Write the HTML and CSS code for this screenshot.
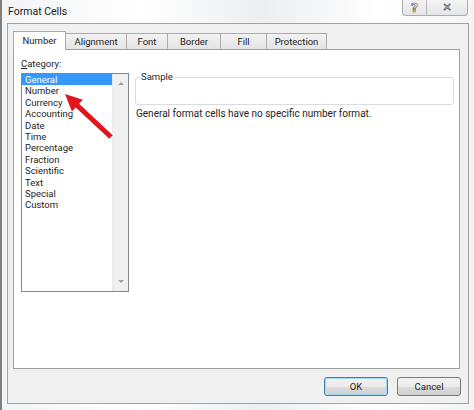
FILE: index.html
```html
<!DOCTYPE html>
<html lang="en">
<head>
<meta charset="utf-8">
<title>Format Cells</title>
<link rel="stylesheet" href="styles.css">
</head>
<body>
<div class="window">
  <div class="titlebar">
    <span class="title">Format Cells</span>
    <div class="caption-buttons">
      <span class="cap help">?</span>
      <span class="cap close">✕</span>
    </div>
  </div>
  <div class="dialog">
    <div class="tabs">
      <span class="tab active">Number</span>
      <span class="tab">Alignment</span>
      <span class="tab">Font</span>
      <span class="tab">Border</span>
      <span class="tab">Fill</span>
      <span class="tab">Protection</span>
    </div>
    <div class="panel">
      <div class="category">
        <div class="label"><u>C</u>ategory:</div>
        <div class="listbox">
          <ul class="items">
            <li class="selected">General</li>
            <li>Number</li>
            <li>Currency</li>
            <li>Accounting</li>
            <li>Date</li>
            <li>Time</li>
            <li>Percentage</li>
            <li>Fraction</li>
            <li>Scientific</li>
            <li>Text</li>
            <li>Special</li>
            <li>Custom</li>
          </ul>
          <div class="scrollbar">
            <span class="arrow-up"></span>
            <span class="arrow-down"></span>
          </div>
        </div>
      </div>
      <div class="details">
        <fieldset class="sample">
          <legend>Sample</legend>
          <div class="sample-value"></div>
        </fieldset>
        <p class="desc">General format cells have no specific number format.</p>
      </div>
    </div>
    <div class="buttons">
      <span class="btn default">OK</span>
      <span class="btn">Cancel</span>
    </div>
  </div>
  <svg class="annotation" width="474" height="410" viewBox="0 0 474 410">
    <polygon fill="#e3151c" points="65,94 82.9,99.8 79.1,103.8 112.7,135.2 109.3,138.8 75.7,107.4 71.9,111.4"/>
  </svg>
</div>
</body>
</html>
```

FILE: styles.css
```css
* { box-sizing: border-box; }

html, body {
  margin: 0;
  padding: 0;
}

body {
  width: 474px;
  height: 410px;
  overflow: hidden;
  font-family: Roboto, "Liberation Sans", sans-serif;
  font-size: 9.5px;
  color: #1e1e1e;
  background: #f6f7f8;
}

.window {
  position: relative;
  width: 474px;
  height: 410px;
  border-left: 2px solid #7f7f7f;
  background: linear-gradient(90deg, #f3f4f5 0%, #ffffff 30%, #eceef0 55%, #ffffff 80%, #f3f4f5 100%);
}

/* Title bar */
.titlebar {
  display: flex;
  align-items: flex-start;
  justify-content: space-between;
  height: 23px;
  padding-left: 6px;
  padding-right: 6px;
}

.title {
  font-size: 10.5px;
  line-height: 12px;
  margin-top: 6px;
  color: #1b1b1b;
}

.caption-buttons {
  display: flex;
  height: 16px;
  border: 1px solid #a9adb3;
  border-top: none;
  border-radius: 0 0 4px 4px;
  background: linear-gradient(#f4f4f4, #e3e5e8);
  overflow: hidden;
}

.cap {
  display: flex;
  align-items: center;
  justify-content: center;
  height: 15px;
  font-family: "DejaVu Sans", sans-serif;
  color: #ffffff;
  -webkit-text-stroke: 0.7px #5a5a5a;
}

.help {
  width: 24px;
  font-size: 12px;
  border-right: 1px solid #b6b9be;
  font-weight: bold;
}

.close {
  width: 40px;
  font-size: 11px;
  font-weight: bold;
}

/* Dialog body */
.dialog {
  display: flex;
  flex-direction: column;
  margin-left: 5px;
  width: 462px;
  height: 381px;
  border: 1px solid #a3a3a3;
  background: #f0f0f0;
  padding: 7px 7px 7px 5px;
}

.tabs {
  display: grid;
  grid-template-columns: 53px 61px 41px 53px 46px 60px;
  align-items: end;
  height: 18px;
  position: relative;
  z-index: 1;
}

.tab {
  display: flex;
  align-items: center;
  justify-content: center;
  height: 16px;
  border: 1px solid #acacac;
  border-bottom: none;
  margin-left: -1px;
  background: linear-gradient(#f2f2f2, #e4e4e4);
  color: #1e1e1e;
}

.tab.active {
  height: 19px;
  margin-left: 0;
  margin-bottom: -1px;
  padding-bottom: 1px;
  background: #ffffff;
  border-color: #a8a8a8;
}

.panel {
  display: flex;
  gap: 6px;
  width: 447px;
  height: 320px;
  border: 1px solid #a0a0a0;
  background: #ffffff;
  padding: 8px 5px 0 7px;
}

/* Category list */
.category {
  display: flex;
  flex-direction: column;
}

.label {
  line-height: 12px;
  margin-bottom: 3px;
}

.listbox {
  display: flex;
  width: 108px;
  height: 219px;
  border: 1px solid #828790;
  background: #ffffff;
}

.items {
  list-style: none;
  margin: 0;
  padding: 0;
  width: 90px;
}

.items li {
  height: 11.4px;
  line-height: 11.4px;
  padding-left: 3px;
  white-space: nowrap;
}

.items li.selected {
  background: #3399ff;
  color: #ffffff;
}

.scrollbar {
  display: flex;
  flex-direction: column;
  justify-content: space-between;
  align-items: center;
  width: 16px;
  background: #f0f0f0;
  border-left: 1px solid #e8e8e8;
  padding: 8px 0 8px;
}

.arrow-up,
.arrow-down {
  width: 0;
  height: 0;
  border-left: 3px solid transparent;
  border-right: 3px solid transparent;
}

.arrow-up { border-bottom: 3px solid #a3a3a3; }
.arrow-down { border-top: 3px solid #a3a3a3; }

/* Right side */
.details {
  display: flex;
  flex-direction: column;
  padding-top: 13px;
  width: 319px;
}

.sample {
  margin: 0;
  padding: 0;
  border: 1px solid #d9dde2;
  border-radius: 3px;
}

.sample legend {
  padding: 0 1px;
  margin-left: 4px;
  line-height: 12px;
}

.sample-value {
  height: 21px;
}

.desc {
  margin: 3px 0 0 1px;
  font-size: 10px;
  line-height: 12px;
}

/* Buttons */
.buttons {
  display: flex;
  justify-content: flex-end;
  gap: 9px;
  margin-top: 8px;
}

.btn {
  display: flex;
  align-items: center;
  justify-content: center;
  width: 64px;
  height: 19px;
  border: 1px solid #7a7a7a;
  border-radius: 3px;
  background: linear-gradient(#f3f3f3 0%, #ebebeb 50%, #dddddd 51%, #cfcfcf 100%);
  color: #1e1e1e;
}

.btn.default {
  border-color: #3c7fb1;
  box-shadow: inset 0 0 0 1px #a6d8f4;
}

/* Annotation arrow */
.annotation {
  position: absolute;
  left: -2px;
  top: 0;
  pointer-events: none;
}
```
